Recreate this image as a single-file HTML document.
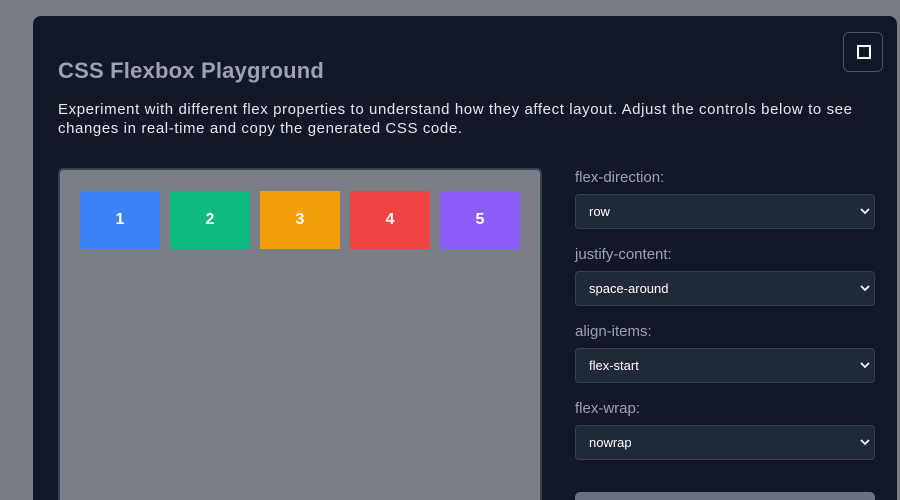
<!DOCTYPE html>
<html style="overflow:hidden;height:500px"><head><style>
body{margin:0;width:900px;height:500px;background:#787c84;font-family:"Liberation Sans",sans-serif;overflow:hidden;position:relative}
.panel{position:absolute;left:33px;top:16px;width:864px;height:484px;background:#111827;border-radius:8px 8px 0 0}
h1{position:absolute;left:58px;top:58px;margin:0;font-size:22px;font-weight:bold;color:#9ca3af;letter-spacing:0.2px}
p{position:absolute;left:58px;top:100px;margin:0;width:815px;font-size:15px;line-height:19px;color:#e5e7eb;letter-spacing:0.6px}
.btn{position:absolute;left:843px;top:32px;width:38px;height:38px;border:1px solid #4b5563;border-radius:6px}
.btn i{position:absolute;left:13px;top:12px;width:10px;height:10px;border:2px solid #fff}
.prev{position:absolute;left:58px;top:168px;width:480px;height:340px;background:#7a7f87;border:2px solid #374151;border-radius:5px}
.b{position:absolute;top:21px;width:80px;height:58px;color:#fff;font-weight:bold;font-size:16px;text-align:center;line-height:58px}
.lab{position:absolute;left:575px;font-size:15px;color:#9ca3af}
.sel{position:absolute;left:575px;width:298px;height:33px;background:#1f2937;border:1px solid #374151;border-radius:4px;color:#fff;font-size:13px;line-height:33px;box-sizing:content-box}
.sel span{position:absolute;left:13px}
.sel svg{position:absolute;right:4px;top:12px}
.gb{position:absolute;left:575px;top:492px;width:300px;height:20px;background:#6b7280;border-radius:5px}
</style></head><body>
<div class="panel"></div>
<h1>CSS Flexbox Playground</h1>
<p>Experiment with different flex properties to understand how they affect layout. Adjust the controls below to see changes in real-time and copy the generated CSS code.</p>
<div class="btn"><i></i></div>
<div class="prev">
<div class="b" style="left:20px;background:#3b82f6">1</div>
<div class="b" style="left:110px;background:#10b981">2</div>
<div class="b" style="left:200px;background:#f59e0b">3</div>
<div class="b" style="left:290px;background:#ef4444">4</div>
<div class="b" style="left:380px;background:#8b5cf6">5</div>
</div>
<div class="lab" style="top:169px">flex-direction:</div>
<div class="sel" style="top:194px"><span>row</span><svg width="10" height="8"><path d="M1 2l4 4 4-4" stroke="#fff" stroke-width="1.8" fill="none"/></svg></div>
<div class="lab" style="top:246px">justify-content:</div>
<div class="sel" style="top:271px"><span>space-around</span><svg width="10" height="8"><path d="M1 2l4 4 4-4" stroke="#fff" stroke-width="1.8" fill="none"/></svg></div>
<div class="lab" style="top:323px">align-items:</div>
<div class="sel" style="top:348px"><span>flex-start</span><svg width="10" height="8"><path d="M1 2l4 4 4-4" stroke="#fff" stroke-width="1.8" fill="none"/></svg></div>
<div class="lab" style="top:400px">flex-wrap:</div>
<div class="sel" style="top:425px"><span>nowrap</span><svg width="10" height="8"><path d="M1 2l4 4 4-4" stroke="#fff" stroke-width="1.8" fill="none"/></svg></div>
<div class="gb"></div>
</body></html>
